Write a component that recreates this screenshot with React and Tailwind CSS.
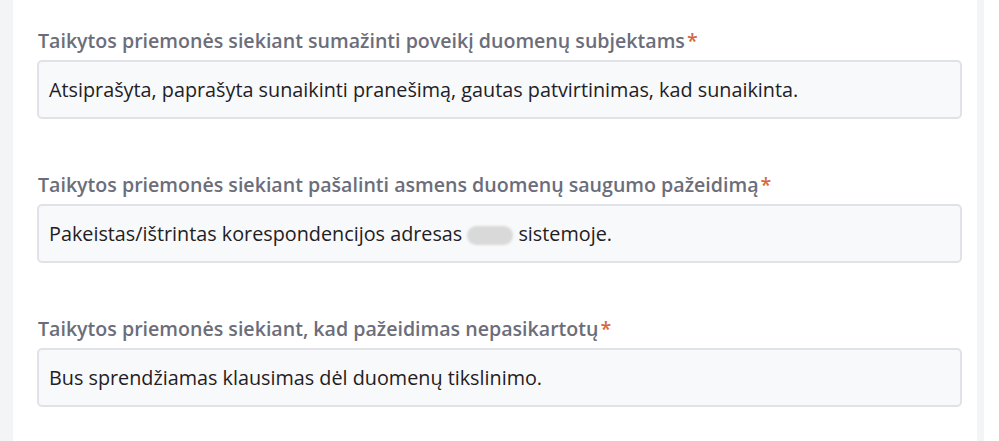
const fields = [
  {
    label: 'Taikytos priemonės siekiant sumažinti poveikį duomenų subjektams',
    value: 'Atsiprašyta, paprašyta sunaikinti pranešimą, gautas patvirtinimas, kad sunaikinta.',
  },
  {
    label: 'Taikytos priemonės siekiant pašalinti asmens duomenų saugumo pažeidimą',
    value: (
      <>
        Pakeistas/ištrintas korespondencijos adresas{' '}
        <span className="inline-block align-middle w-[46px] h-[19px] rounded-full bg-[#d9d9d9] blur-[1px] mr-[5px]" />
        sistemoje.
      </>
    ),
  },
  {
    label: 'Taikytos priemonės siekiant, kad pažeidimas nepasikartotų',
    value: 'Bus sprendžiamas klausimas dėl duomenų tikslinimo.',
  },
]

function Field({ label, value }) {
  return (
    <div className="flex flex-col gap-[6px]">
      <label className="text-[19.6px] leading-[26px] font-semibold text-[#6b6e7a] pl-px whitespace-nowrap">
        {label}
        <span className="text-[#d4683f] ml-[2px]">*</span>
      </label>
      <div className="h-[59px] flex items-center px-[10px] bg-[#f8f9fb] border-2 border-[#e0e2e7] rounded-[5px] text-[19.8px] text-[#1f2023] whitespace-nowrap">
        <span>{value}</span>
      </div>
    </div>
  )
}

export default function App() {
  return (
    <div className="w-[999px] h-[441px] flex bg-white overflow-hidden" style={{ fontFamily: '"Open Sans", "Noto Sans", sans-serif' }}>
      <div className="w-[13px] bg-[#f3f4f6]" />
      <div className="w-[964px] flex flex-col gap-[53px] pt-[28px] pl-[24px] pr-[15px]">
        {fields.map((f, i) => (
          <Field key={i} {...f} />
        ))}
      </div>
      <div className="w-[7px] bg-[#f3f4f6]" />
      <div className="flex-1" />
    </div>
  )
}
